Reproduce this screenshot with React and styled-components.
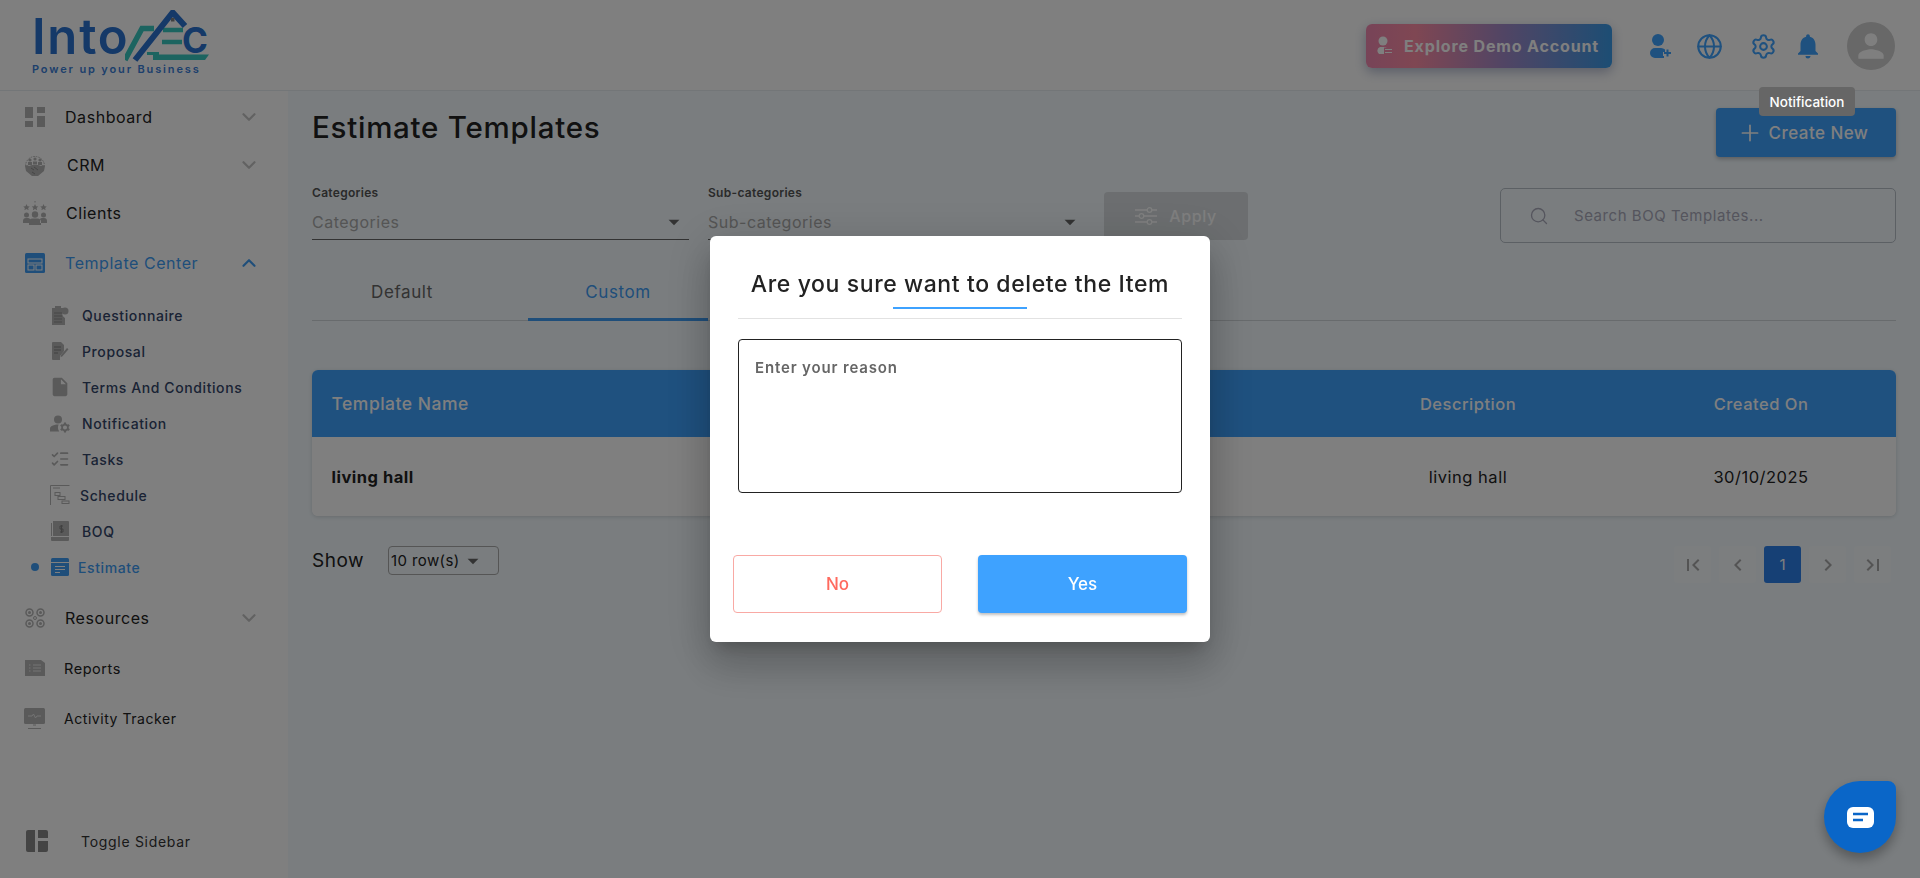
import React from 'react';
import styled, { createGlobalStyle } from 'styled-components';
import { ChevronDown, ChevronUp, Globe, Settings, Plus, Search, ListChecks } from 'lucide-react';
import { MdNotifications, MdPerson, MdInsertDriveFile, MdManageAccounts, MdFirstPage, MdLastPage, MdChevronLeft, MdChevronRight, MdArrowDropDown } from 'react-icons/md';

const GlobalStyle = createGlobalStyle`
  html, body { margin: 0; padding: 0; height: 100%; overflow: hidden; }
  body { font-family: Inter, "Open Sans", "Liberation Sans", sans-serif; color: #222; }
  * { box-sizing: border-box; }
`;

const Page = styled.div`
  width: 1920px;
  height: 878px;
  display: grid;
  grid-template-columns: 288px 1fr;
  grid-template-rows: 91px 1fr;
  background: #f4fbff;
`;

/* header */
const Header = styled.header`
  grid-column: 1 / 3;
  background: #fff;
  border-bottom: 1px solid #e6ecf0;
  display: flex;
  align-items: flex-start;
  padding: 0 25px 0 32px;
`;

const LogoWrap = styled.div`
  display: flex;
  flex-direction: column;
  padding-top: 10px;
`;

const LogoTop = styled.div`
  display: flex;
  align-items: flex-end;
  height: 52px;
`;

const LogoInto = styled.span`
  width: 93px;
  font-size: 49px;
  line-height: 50px;
  font-weight: 600;
  color: #2a72d0;
  letter-spacing: 1.8px;
`;

const LogoTag = styled.span`
  font-size: 11px;
  line-height: 14px;
  font-weight: 600;
  color: #3a80d8;
  letter-spacing: 1.86px;
  white-space: nowrap;
`;

const HeaderRight = styled.div`
  margin-left: auto;
  display: flex;
  align-items: center;
  padding-top: 22px;
`;

const DemoButton = styled.button`
  width: 246px;
  height: 44px;
  border: 0;
  border-radius: 6px;
  display: flex;
  align-items: center;
  gap: 11px;
  padding: 0 0 0 9px;
  margin-right: 34px;
  color: #fff;
  font: 700 16px Inter, sans-serif;
  letter-spacing: 0.85px;
  background: linear-gradient(90deg, #ef88b0 0%, #ff8ea6 20%, #a58ac8 55%, #3a9be8 100%);
  box-shadow: 0 4px 12px rgba(40, 60, 120, 0.35);
  white-space: nowrap;
`;

const HeadIcon = styled.span`
  width: ${({ $w }) => $w}px;
  display: flex;
  justify-content: center;
  color: #3ea2ff;
`;

const Avatar = styled.div`
  width: 48px;
  height: 48px;
  border-radius: 50%;
  background: #d0d0d0;
  display: flex;
  align-items: center;
  justify-content: center;
  color: #fff;
  margin-left: 15px;
`;

/* sidebar */
const Sidebar = styled.aside`
  background: #fff;
  display: flex;
  flex-direction: column;
  padding: 2px 0 13px;
`;

const NavRow = styled.div`
  height: 48px;
  margin-top: ${({ $mt }) => $mt || 0}px;
  display: flex;
  align-items: center;
  padding-left: 23px;
  color: ${({ $active }) => ($active ? '#3f9df5' : '#222')};
  font-size: 16px;
  letter-spacing: 0.55px;
`;

const NavIcon = styled.span`
  width: 24px;
  height: 24px;
  display: flex;
  align-items: center;
  justify-content: center;
  flex: none;
  color: #b4b4b4;
`;

const NavText = styled.span`
  margin-left: ${({ $ml }) => $ml}px;
  font-size: ${({ $fs }) => $fs || 16}px;
`;

const Chevron = styled.span`
  margin-left: auto;
  margin-right: 28px;
  display: flex;
  color: ${({ $active }) => ($active ? '#3f9df5' : '#c4c4c4')};
`;

const SubList = styled.div`
  margin-top: 10px;
  display: flex;
  flex-direction: column;
`;

const SubRow = styled.div`
  height: 36px;
  display: flex;
  align-items: center;
  padding-left: 48px;
  position: relative;
  font-size: 14px;
  font-weight: 500;
  letter-spacing: 0.6px;
  color: ${({ $active }) => ($active ? '#3f9df5' : '#34466a')};
`;

const SubText = styled.span`
  margin-left: ${({ $ml }) => $ml}px;
`;

const ActiveDot = styled.span`
  position: absolute;
  left: 31px;
  top: 14px;
  width: 8px;
  height: 8px;
  border-radius: 50%;
  background: #3f9df5;
`;

const ToggleRow = styled.div`
  margin-top: auto;
  height: 48px;
  display: flex;
  align-items: center;
  padding-left: 26px;
  font-size: 14px;
  letter-spacing: 0.7px;
  color: #333;
`;

/* main */
const Main = styled.main`
  padding: 15px 24px 0;
  display: flex;
  flex-direction: column;
`;

const TitleRow = styled.div`
  display: flex;
  justify-content: space-between;
  height: 80px;
`;

const Title = styled.h1`
  margin: 0;
  font-size: 29.5px;
  line-height: 42px;
  font-weight: 500;
  color: #222;
  letter-spacing: 0.75px;
`;

const CreateButton = styled.button`
  width: 180px;
  height: 49px;
  margin-top: 2px;
  border: 0;
  border-radius: 4px;
  background: #3ea2ff;
  color: #fff;
  display: flex;
  align-items: center;
  justify-content: center;
  gap: 6px;
  padding-right: 13px;
  font: 500 17px Inter, sans-serif;
  letter-spacing: 0.45px;
  box-shadow: 0 2px 4px rgba(0, 0, 0, 0.25);
`;

const FilterRow = styled.div`
  display: flex;
  align-items: flex-start;
  height: 77px;
`;

const Field = styled.div`
  width: 377px;
  margin-right: 19px;
  height: 54px;
  border-bottom: 1px solid #666;
`;

const FieldLabel = styled.div`
  font-size: 12px;
  line-height: 14px;
  font-weight: 600;
  color: #555;
  letter-spacing: 0.3px;
`;

const FieldValue = styled.div`
  margin-top: 9px;
  display: flex;
  align-items: center;
  justify-content: space-between;
  font-size: 16px;
  line-height: 24px;
  color: #aaa;
  letter-spacing: 0.5px;
  padding-right: 2px;
`;

const ApplyButton = styled.button`
  width: 144px;
  height: 48px;
  margin-top: 6px;
  border: 0;
  border-radius: 4px;
  background: #d8dde0;
  color: #fff;
  display: flex;
  align-items: center;
  justify-content: center;
  gap: 12px;
  padding-right: 6px;
  font: 500 16px Inter, sans-serif;
  letter-spacing: 0.6px;
`;

const SearchBox = styled.div`
  margin-left: auto;
  margin-top: 2px;
  width: 396px;
  height: 55px;
  border: 1px solid #b8c0c8;
  border-radius: 5px;
  display: flex;
  align-items: center;
  padding-left: 28px;
  gap: 25px;
  color: #aab;
  font-size: 15px;
  letter-spacing: 0.55px;
`;

const Tabs = styled.div`
  display: flex;
  gap: 36px;
  height: 58px;
  border-bottom: 1px solid #d0d6da;
`;

const Tab = styled.div`
  width: 180px;
  height: 58px;
  display: flex;
  align-items: center;
  justify-content: center;
  font-size: 17px;
  letter-spacing: 0.6px;
  color: ${({ $active }) => ($active ? '#3f9df5' : '#666')};
  border-bottom: ${({ $active }) => ($active ? '3px solid #3f9df5' : '0')};
  padding-top: ${({ $active }) => ($active ? '3px' : '0')};
`;

const Table = styled.div`
  margin-top: 49px;
  border-radius: 6px;
  background: #fff;
  box-shadow: 0 1px 4px rgba(0, 0, 0, 0.15);
  overflow: hidden;
`;

const TableRow = styled.div`
  display: grid;
  grid-template-columns: 998px 316px 270px;
  align-items: center;
  height: ${({ $head }) => ($head ? 67 : 79)}px;
  background: ${({ $head }) => ($head ? '#3ea2ff' : '#fff')};
  color: ${({ $head }) => ($head ? '#fff' : '#222')};
  font-size: 16.500px;
  font-weight: ${({ $head }) => ($head ? 500 : 400)};
  letter-spacing: 0.5px;
`;

const NameCell = styled.div`
  padding-left: 19.500px;
  font-size: ${({ $bold }) => ($bold ? 16.5 : 17.5)}px;
  font-weight: ${({ $bold }) => ($bold ? 700 : 'inherit')};
`;

const Cell = styled.div`
  text-align: center;
`;

const TableFoot = styled.div`
  margin-top: 30px;
  display: flex;
  align-items: flex-start;
  justify-content: space-between;
  padding-right: 5px;
`;

const ShowWrap = styled.div`
  display: flex;
  align-items: center;
  font-size: 19px;
  letter-spacing: 0.5px;
  color: #222;
`;

const RowSelect = styled.div`
  margin-left: 24px;
  width: 111px;
  height: 29px;
  border: 1px solid #aaa;
  border-radius: 4px;
  display: flex;
  align-items: center;
  padding-left: 2px;
  font-size: 15px;
  letter-spacing: 0.4px;
`;

const Pager = styled.div`
  display: flex;
  gap: 8px;
`;

const PageBtn = styled.div`
  width: 37px;
  height: 37px;
  border-radius: 3px;
  display: flex;
  align-items: center;
  justify-content: center;
  background: ${({ $active }) => ($active ? '#2c80ea' : '#f8fcff')};
  color: ${({ $active }) => ($active ? '#fff' : '#a8a8a8')};
  font-size: 15px;
`;

/* modal layer */
const Backdrop = styled.div`
  position: fixed;
  inset: 0;
  background: rgba(0, 0, 0, 0.5);
  display: flex;
  align-items: center;
  justify-content: center;
`;

const Modal = styled.div`
  width: 500px;
  height: 406px;
  background: #fff;
  border-radius: 6px;
  box-shadow: 0 11px 15px -7px rgba(0, 0, 0, 0.2), 0 24px 38px 3px rgba(0, 0, 0, 0.14), 0 9px 46px 8px rgba(0, 0, 0, 0.12);
  padding: 32px 23px 0;
  display: flex;
  flex-direction: column;
`;

const ModalTitle = styled.div`
  text-align: center;
  font-size: 23px;
  line-height: 32px;
  font-weight: 500;
  color: #222;
  letter-spacing: 0.6px;
  white-space: nowrap;
`;

const TitleRule = styled.div`
  margin: 7px 5px 0;
  height: 12px;
  border-bottom: 1px solid #e2e2e2;
  display: flex;
  justify-content: center;
`;

const TitleAccent = styled.span`
  width: 134px;
  height: 2px;
  background: #3ea2ff;
`;

const ReasonBox = styled.textarea`
  display: block;
  margin: 20px 5px 0;
  width: 444px;
  height: 154px;
  flex: none;
  border: 1px solid #222;
  border-radius: 4px;
  padding: 18px 16px;
  font: 600 15px/20px Inter, sans-serif;
  letter-spacing: 0.85px;
  resize: none;
  outline: none;
  &::placeholder { color: #666; opacity: 1; }
`;

const ModalActions = styled.div`
  margin-top: 62px;
  display: flex;
  justify-content: space-between;
`;

const ActionButton = styled.button`
  width: 209px;
  height: 58px;
  border-radius: 4px;
  font: 500 17px Inter, sans-serif;
  border: ${({ $primary }) => ($primary ? '0' : '1px solid #f9a9a4')};
  background: ${({ $primary }) => ($primary ? '#3ea2ff' : '#fff')};
  color: ${({ $primary }) => ($primary ? '#fff' : '#ff6a5e')};
  box-shadow: ${({ $primary }) => ($primary ? '0 2px 3px rgba(0,0,0,.25)' : 'none')};
`;

const Tooltip = styled.div`
  position: fixed;
  left: 1759px;
  top: 87px;
  width: 96px;
  height: 29px;
  border-radius: 4px;
  background: #666;
  color: #fff;
  font-size: 13.500px;
  font-weight: 500;
  display: flex;
  align-items: center;
  justify-content: center;
`;

const ChatBubble = styled.div`
  position: fixed;
  left: 1824px;
  top: 781px;
  width: 72px;
  height: 72px;
  border-radius: 50% 8px 50% 50%;
  background: #0a66c8;
  box-shadow: 0 6px 12px rgba(0, 0, 0, 0.3);
  display: flex;
  align-items: center;
  justify-content: center;
`;

/* drawn icons */
const DashboardIcon = () => (
  <svg width="20" height="20" viewBox="0 0 20 20" fill="currentColor"><rect x="0" y="0" width="8" height="11" /><rect x="12" y="0" width="8" height="6" /><rect x="12" y="9" width="8" height="11" /><rect x="0" y="14" width="8" height="6" /></svg>
);
const CrmIcon = () => (
  <svg width="22" height="24" viewBox="0 0 22 24" fill="currentColor">
    <path d="M1.500 13a9.500 9.500 0 0 1 19 0" fill="none" stroke="currentColor" strokeWidth="1" strokeDasharray="1.600 1" />
    <circle cx="6" cy="7" r="1.600" /><circle cx="11" cy="6" r="1.600" /><circle cx="16" cy="7" r="1.600" />
    <rect x="4" y="9" width="4" height="3" /><rect x="9" y="8.500" width="4" height="3" /><rect x="14" y="9" width="4" height="3" />
    <path d="M1 13l2-1 2 1 3-1h6l3 1 2-1 2 1-1 5-6 5h-6l-6-5z" />
    <path d="M7 15l3 2M10 14l4 3M8 19l3 2" stroke="#808080" strokeWidth=".8" />
  </svg>
);
const ClientsIcon = () => (
  <svg width="24" height="24" viewBox="0 0 24 24" fill="currentColor">
    <path d="M3.500 3l1 2.200 2.300.2-1.700 1.500.5 2.300-2.100-1.200-2.100 1.200.5-2.300L.2 5.400l2.300-.2zM12 3l1 2.200 2.300.2-1.700 1.500.5 2.300L12 8l-2.100 1.200.5-2.300-1.700-1.500 2.300-.2zM20.500 3l1 2.200 2.300.2-1.700 1.500.5 2.300-2.100-1.200-2.100 1.200.5-2.300-1.700-1.500 2.300-.2z" />
    <path d="M12 0v1.500" stroke="currentColor" />
    <circle cx="3.500" cy="14" r="2.500" /><circle cx="12" cy="13.500" r="3.200" /><circle cx="20.500" cy="14" r="2.500" />
    <path d="M0 22v-2a3 3 0 0 1 3-3h2a3 3 0 0 1 2 1v4zM24 22v-2a3 3 0 0 0-3-3h-2a3 3 0 0 0-2 1v4zM6 24v-3a3.500 3.500 0 0 1 3.500-3.500h5A3.500 3.500 0 0 1 18 21v3z" />
  </svg>
);
const TemplateIcon = () => (
  <svg width="20" height="20" viewBox="0 0 20 20"><rect width="20" height="20" rx="1.500" fill="#3f9df5" /><rect x="3" y="6" width="14" height="4" fill="none" stroke="#fff" /><rect x="3" y="12" width="6" height="5" fill="none" stroke="#fff" /><rect x="11" y="12" width="6" height="5" fill="none" stroke="#fff" /></svg>
);
const QuestionIcon = () => (
  <svg width="18" height="20" viewBox="0 0 18 20" fill="currentColor"><path d="M1 3h3V1h6v2h2v3a5 5 0 0 0 2 7v7H1z" /><circle cx="14" cy="6" r="3.500" /><path d="M3 8h8M3 11h8M3 14h8M3 17h8" stroke="#808080" strokeWidth=".7" /></svg>
);
const ProposalIcon = () => (
  <svg width="18" height="18" viewBox="0 0 18 18" fill="currentColor"><path d="M1 1a1 1 0 0 1 1-1h8l3 3v6l-4 5v4H2a1 1 0 0 1-1-1z" /><path d="M3 5h7M3 8h7M3 11h4" stroke="#808080" strokeWidth="1" /><path d="M10 13l6-7 1.500 1.200-6 7-2 1z" /></svg>
);
const GanttIcon = () => (
  <svg width="20" height="20" viewBox="0 0 20 20" fill="none" stroke="currentColor"><path d="M.5 20V.5H19.500M3 3h7" /><rect x="5" y="7.500" width="5" height="3" /><rect x="8" y="11.500" width="7" height="3" /><rect x="12" y="16" width="7" height="2.500" /></svg>
);
const BookIcon = () => (
  <svg width="20" height="22" viewBox="0 0 20 22" fill="currentColor"><path d="M3 1h15a1 1 0 0 1 1 1v14H3zM1 3h1v13H1zM1 17h18v3a1 1 0 0 1-1 1H2a1 1 0 0 1-1-1z" /><path d="M13 5h-3v3h3v3h-3M11.500 4v8" stroke="#808080" fill="none" transform="translate(0 1)" /></svg>
);
const EstimateIcon = () => (
  <svg width="18" height="18" viewBox="0 0 18 18"><rect width="18" height="18" rx="1.500" fill="#3f9df5" /><path d="M0 4.500h18" stroke="#fff" /><path d="M4 8.500h10M4 11.500h10M4 14.500h5" stroke="#fff" /></svg>
);
const ResourceIcon = () => (
  <svg width="20" height="20" viewBox="0 0 20 20" fill="none" stroke="currentColor" strokeWidth="1.500"><circle cx="4.500" cy="4.500" r="3.500" /><circle cx="15.500" cy="4.500" r="3.500" /><circle cx="4.500" cy="15.500" r="3.500" /><circle cx="15.500" cy="15.500" r="3.500" /><circle cx="10" cy="10" r="1.500" strokeWidth="1" /><g fill="currentColor" stroke="none"><circle cx="4.500" cy="4.500" r="1.500" /><circle cx="15.500" cy="4.500" r="1.500" /><circle cx="4.500" cy="15.500" r="1.500" /><circle cx="15.500" cy="15.500" r="1.500" /></g></svg>
);
const ReportIcon = () => (
  <svg width="20" height="16" viewBox="0 0 20 16" fill="currentColor"><path d="M0 0h16l4 3v13H0z" /><path d="M4 5h1.500M4 8h1.500M4 11h1.500M8 5h8M8 8h8M8 11h8" stroke="#e8e8e8" strokeWidth="1.200" /></svg>
);
const MonitorIcon = () => (
  <svg width="22" height="21" viewBox="0 0 22 21" fill="currentColor"><rect x="0" y="0" width="21" height="16" rx="1.500" /><path d="M4 8h4l1.500-2 2 4 1.500-2h4" stroke="#e8e8e8" fill="none" /><path d="M9 17h3M4 20.500h13" stroke="currentColor" /></svg>
);
const ToggleIcon = () => (
  <svg width="22" height="22" viewBox="0 0 22 22" fill="#888"><path d="M2 0h7v22H2a2 2 0 0 1-2-2V2a2 2 0 0 1 2-2zM12 0h8a2 2 0 0 1 2 2v6H12zM12 11h10v9a2 2 0 0 1-2 2h-8z" /></svg>
);
const UserPlusIcon = () => (
  <svg width="24" height="26" viewBox="0 0 24 26" fill="currentColor"><circle cx="9" cy="7" r="6" /><path d="M6 15h6a6 6 0 0 1 4 1.500V19h-2v4h1v2H6a5 5 0 0 1 0-10z" /><path d="M18.500 16.500v7M15 20h7" stroke="currentColor" strokeWidth="2" /></svg>
);
const DemoIcon = () => (
  <svg width="18" height="20" viewBox="0 0 18 20" fill="#fff"><circle cx="8" cy="5" r="4.500" /><path d="M5 11h5a4 4 0 0 1 2 .5H9v6.500H4a4 4 0 0 1 1-7z" /><path d="M10 13.500h7M10 16.500h7" stroke="#fff" strokeWidth="1.200" /></svg>
);
const SlidersIcon = () => (
  <svg width="22" height="20" viewBox="0 0 22 20" fill="none" stroke="currentColor" strokeWidth="1.300"><path d="M0 4h12M17 4h5M0 10h4M9 10h13M0 16h12M17 16h5" /><circle cx="14.500" cy="4" r="2.300" /><circle cx="6.500" cy="10" r="2.300" /><circle cx="14.500" cy="16" r="2.300" /></svg>
);
const ChatIcon = () => (
  <svg width="27" height="21" viewBox="0 0 27 21"><rect width="27" height="21" rx="6" fill="#fff" /><path d="M6 7h15M6 13h10" stroke="#0a66c8" strokeWidth="2.400" /></svg>
);

const LogoMark = () => (
  <svg width="84" height="52" viewBox="0 0 84 52">
    <path d="M0 50L17 18.500H29" stroke="#38c8c0" strokeWidth="5.500" fill="none" />
    <path d="M22 43.500H34" stroke="#38c8c0" strokeWidth="3" />
    <path d="M38 20H58M37 32H57" stroke="#38c8c0" strokeWidth="4.500" />
    <path d="M28 44.500H84L80 50H28z" fill="#38c8c0" />
    <path d="M10 50L47.700 2.500L60 16" stroke="#2a72d0" strokeWidth="6" fill="none" />
    <rect x="46" y="8" width="3.500" height="3.500" fill="#808080" />
    <text x="57" y="43" fontFamily="Inter, sans-serif" fontWeight="700" fontSize="35" fill="#2a72d0">C</text>
  </svg>
);

const mainNavTop = [
  { label: 'Dashboard', icon: <DashboardIcon />, ml: 18, chev: true },
  { label: 'CRM', icon: <CrmIcon />, ml: 20, chev: true },
  { label: 'Clients', icon: <ClientsIcon />, ml: 19 },
];

const subNav = [
  { label: 'Questionnaire', icon: <QuestionIcon />, ml: 10 },
  { label: 'Proposal', icon: <ProposalIcon />, ml: 10 },
  { label: 'Terms And Conditions', icon: <MdInsertDriveFile size={22} />, ml: 10 },
  { label: 'Notification', icon: <MdManageAccounts size={25} />, ml: 10 },
  { label: 'Tasks', icon: <ListChecks size={20} />, ml: 10 },
  { label: 'Schedule', icon: <GanttIcon />, ml: 8 },
  { label: 'BOQ', icon: <BookIcon />, ml: 10 },
];

const mainNavBottom = [
  { label: 'Reports', icon: <ReportIcon />, ml: 17, mt: 2, fs: 14.5 },
  { label: 'Activity Tracker', icon: <MonitorIcon />, ml: 17, mt: 2, fs: 14 },
];

const App = () => {
  return (
    <>
      <GlobalStyle />
      <Page>
        <Header>
          <LogoWrap>
            <LogoTop>
              <LogoInto>Into</LogoInto>
              <LogoMark />
            </LogoTop>
            <LogoTag>Power up your Business</LogoTag>
          </LogoWrap>
          <HeaderRight>
            <DemoButton><DemoIcon />Explore Demo Account</DemoButton>
            <HeadIcon $w={30}><UserPlusIcon /></HeadIcon>
            <HeadIcon $w={66}><Globe size={27} strokeWidth={1.8} /></HeadIcon>
            <HeadIcon $w={42}><Settings size={27} strokeWidth={1.8} /></HeadIcon>
            <HeadIcon $w={48}><MdNotifications size={30} /></HeadIcon>
            <Avatar><MdPerson size={38} /></Avatar>
          </HeaderRight>
        </Header>

        <Sidebar>
          {mainNavTop.map(({ label, icon, ml, chev }) => (
            <NavRow key={label}>
              <NavIcon>{icon}</NavIcon>
              <NavText $ml={ml}>{label}</NavText>
              {chev && <Chevron><ChevronDown size={22} strokeWidth={2.4} /></Chevron>}
            </NavRow>
          ))}
          <NavRow $active $mt={2}>
            <NavIcon><TemplateIcon /></NavIcon>
            <NavText $ml={18}>Template Center</NavText>
            <Chevron $active><ChevronUp size={22} strokeWidth={2.4} /></Chevron>
          </NavRow>
          <SubList>
            {subNav.map(({ label, icon, ml }) => (
              <SubRow key={label}>
                <NavIcon>{icon}</NavIcon>
                <SubText $ml={ml}>{label}</SubText>
              </SubRow>
            ))}
            <SubRow $active>
              <ActiveDot />
              <NavIcon><EstimateIcon /></NavIcon>
              <SubText $ml={6}>Estimate</SubText>
            </SubRow>
          </SubList>
          <NavRow $mt={9}>
            <NavIcon><ResourceIcon /></NavIcon>
            <NavText $ml={18}>Resources</NavText>
            <Chevron><ChevronDown size={22} strokeWidth={2.4} /></Chevron>
          </NavRow>
          {mainNavBottom.map(({ label, icon, ml, mt, fs }) => (
            <NavRow key={label} $mt={mt}>
              <NavIcon>{icon}</NavIcon>
              <NavText $ml={ml} $fs={fs}>{label}</NavText>
            </NavRow>
          ))}
          <ToggleRow>
            <ToggleIcon />
            <SubText $ml={33}>Toggle Sidebar</SubText>
          </ToggleRow>
        </Sidebar>

        <Main>
          <TitleRow>
            <Title>Estimate Templates</Title>
            <CreateButton><Plus size={26} strokeWidth={1.6} />Create New</CreateButton>
          </TitleRow>
          <FilterRow>
            <Field>
              <FieldLabel>Categories</FieldLabel>
              <FieldValue>Categories<MdArrowDropDown size={26} color="#666" /></FieldValue>
            </Field>
            <Field>
              <FieldLabel>Sub-categories</FieldLabel>
              <FieldValue>Sub-categories<MdArrowDropDown size={26} color="#666" /></FieldValue>
            </Field>
            <ApplyButton><SlidersIcon />Apply</ApplyButton>
            <SearchBox><Search size={20} strokeWidth={1.6} />Search BOQ Templates...</SearchBox>
          </FilterRow>
          <Tabs>
            <Tab>Default</Tab>
            <Tab $active>Custom</Tab>
          </Tabs>
          <Table>
            <TableRow $head>
              <NameCell>Template Name</NameCell>
              <Cell>Description</Cell>
              <Cell>Created On</Cell>
            </TableRow>
            <TableRow>
              <NameCell $bold>living hall</NameCell>
              <Cell>living hall</Cell>
              <Cell>30/10/2025</Cell>
            </TableRow>
          </Table>
          <TableFoot>
            <ShowWrap>
              Show
              <RowSelect>10 row(s)<MdArrowDropDown size={26} color="#666" /></RowSelect>
            </ShowWrap>
            <Pager>
              <PageBtn><MdFirstPage size={24} /></PageBtn>
              <PageBtn><MdChevronLeft size={24} /></PageBtn>
              <PageBtn $active>1</PageBtn>
              <PageBtn><MdChevronRight size={24} /></PageBtn>
              <PageBtn><MdLastPage size={24} /></PageBtn>
            </Pager>
          </TableFoot>
        </Main>
      </Page>

      <Backdrop>
        <Modal>
          <ModalTitle>Are you sure want to delete the Item</ModalTitle>
          <TitleRule><TitleAccent /></TitleRule>
          <ReasonBox placeholder="Enter your reason" />
          <ModalActions>
            <ActionButton>No</ActionButton>
            <ActionButton $primary>Yes</ActionButton>
          </ModalActions>
        </Modal>
      </Backdrop>
      <Tooltip>Notification</Tooltip>
      <ChatBubble><ChatIcon /></ChatBubble>
    </>
  );
};

export default App;
